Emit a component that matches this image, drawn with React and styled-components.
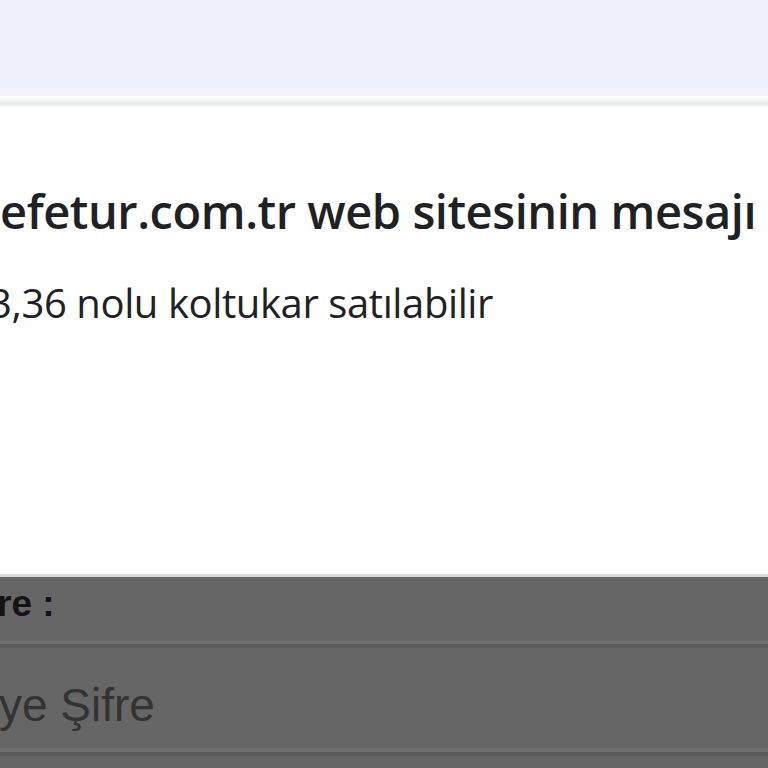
import React from "react";
import styled, { createGlobalStyle } from "styled-components";

const GlobalStyle = createGlobalStyle`
  html, body {
    margin: 0;
    padding: 0;
    height: 768px;
    overflow: hidden;
    background: #fff;
  }
  #root {
    height: 768px;
  }
`;

const Screen = styled.div`
  display: flex;
  flex-direction: column;
  height: 768px;
  overflow: hidden;
`;

const Toolbar = styled.div`
  height: 88px;
  flex-shrink: 0;
  background: #edf0f9;
`;

const ToolbarEdge = styled.div`
  height: 8px;
  flex-shrink: 0;
  background: #f2f4fa;
`;

const DialogShadow = styled.div`
  height: 12px;
  flex-shrink: 0;
  background: linear-gradient(
    to bottom,
    #fdfdfe 0px,
    #f3f4f6 4px,
    #e3e5ea 8px,
    #f8f8fa 10px,
    #fff 12px
  );
`;

const Dialog = styled.div`
  height: 469px;
  flex-shrink: 0;
  background: #fff;
  display: flex;
  flex-direction: column;
  overflow: hidden;
  border-bottom: 3px solid #d9d9d9;
  box-sizing: border-box;
`;

const Title = styled.h2`
  margin: 75px 0 0 0;
  font-family: "Open Sans", "Noto Sans", sans-serif;
  font-weight: 600;
  font-size: 47px;
  letter-spacing: -0.45px;
  line-height: 56px;
  color: #202124;
  white-space: nowrap;
`;

const Message = styled.p`
  margin: 38px 0 0 -11px;
  font-family: "Open Sans", "Noto Sans", sans-serif;
  font-weight: 400;
  font-size: 40px;
  letter-spacing: -0.4px;
  line-height: 52px;
  color: #202124;
  white-space: nowrap;
`;

const Page = styled.div`
  flex: 1;
  background: #666;
  display: flex;
  flex-direction: column;
  font-family: "Liberation Sans", Arial, sans-serif;
`;

const Label = styled.div`
  margin: 6px 0 0 -3px;
  height: 56px;
  font-size: 37px;
  font-weight: 700;
  line-height: 42px;
  color: #141414;
`;

const Field = styled.div`
  height: 112px;
  flex-shrink: 0;
  box-sizing: border-box;
  margin-top: 5px;
  padding-top: 31px;
  border-top: 4px solid #5b5b5b;
  border-bottom: 4px solid #5b5b5b;
  box-shadow: 0 -3px 0 #707070, 0 -4px 0 #6f6f6f inset;
  display: flex;
  align-items: flex-start;
`;

const Placeholder = styled.span`
  font-size: 46px;
  line-height: 53px;
  color: #333;
  margin-left: -1px;
`;

export default function App() {
  return (
    <>
      <GlobalStyle />
      <Screen>
        <Toolbar />
        <ToolbarEdge />
        <DialogShadow />
        <Dialog>
          <Title>efetur.com.tr web sitesinin mesajı</Title>
          <Message>3,36 nolu koltukar satılabilir</Message>
        </Dialog>
        <Page>
          <Label>re :</Label>
          <Field>
            <Placeholder>ye Şifre</Placeholder>
          </Field>
        </Page>
      </Screen>
    </>
  );
}
